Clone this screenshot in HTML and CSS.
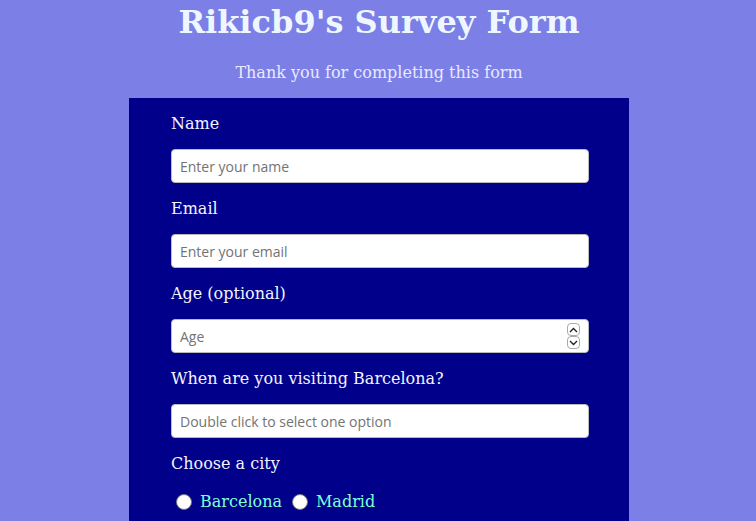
FILE: index.html
```html
<!DOCTYPE html>
<html>
<head>
<meta charset="utf-8">
<link rel="stylesheet" href="styles.css">
</head>
<body>
<h1 class="title">Rikicb9's Survey Form</h1>
<p class="subtitle">Thank you for completing this form</p>
<form class="survey">
  <label class="field-label">Name</label>
  <input class="field" type="text" placeholder="Enter your name">
  <label class="field-label">Email</label>
  <input class="field" type="email" placeholder="Enter your email">
  <label class="field-label">Age (optional)</label>
  <div class="number-wrap">
    <input class="field" type="number" placeholder="Age">
    <div class="spinner">
      <span class="spin-btn"><svg width="9" height="6" viewBox="0 0 9 6"><path d="M1 5 L4.5 1.5 L8 5" fill="none" stroke="#222" stroke-width="1.4"/></svg></span>
      <span class="spin-btn"><svg width="9" height="6" viewBox="0 0 9 6"><path d="M1 1 L4.5 4.5 L8 1" fill="none" stroke="#222" stroke-width="1.4"/></svg></span>
    </div>
  </div>
  <label class="field-label">When are you visiting Barcelona?</label>
  <input class="field" type="text" placeholder="Double click to select one option">
  <label class="field-label">Choose a city</label>
  <div class="radios">
    <label class="radio"><span class="radio-dot"></span>Barcelona</label>
    <label class="radio"><span class="radio-dot"></span>Madrid</label>
  </div>
</form>
</body>
</html>
```
FILE: styles.css
```css
html, body {
  margin: 0;
  padding: 0;
}
body {
  background: #7b7fe6;
  font-family: "DejaVu Serif", serif;
  height: 521px;
  overflow: hidden;
  padding-left: 2px;
  box-sizing: border-box;
}
.title {
  margin: 0;
  padding-top: 2px;
  text-align: center;
  color: #eef6ff;
  font-size: 32px;
  font-weight: bold;
  line-height: 40px;
}
.subtitle {
  margin: 0;
  padding-top: 19px;
  text-align: center;
  color: #eaeaff;
  font-size: 16px;
  line-height: 24px;
}
.survey {
  width: 500px;
  margin: 13px auto 0;
  background: #00008b;
  padding: 12px 40px 20px 42px;
  box-sizing: border-box;
  display: flex;
  flex-direction: column;
  min-height: 440px;
}
.field-label {
  color: #f4f4ff;
  font-size: 16px;
  line-height: 24px;
  margin-top: 2px;
  margin-bottom: 13px;
}
.field {
  width: 418px;
  height: 34px;
  box-sizing: border-box;
  border: 1px solid #bbb;
  border-radius: 4px;
  background: #fff;
  padding: 0 8px;
  font-family: "Open Sans", sans-serif;
  font-size: 14px;
  margin: 0 0 12px;
}
.field::placeholder {
  color: #737373;
}
.number-wrap {
  position: relative;
  width: 418px;
}
.number-wrap .field::-webkit-inner-spin-button,
.number-wrap .field::-webkit-outer-spin-button {
  -webkit-appearance: none;
  margin: 0;
}
.spinner {
  position: absolute;
  right: 9px;
  top: 4px;
  display: flex;
  flex-direction: column;
}
.spin-btn {
  width: 13px;
  height: 13px;
  box-sizing: border-box;
  border: 1px solid #aaa;
  border-radius: 4px;
  display: flex;
  align-items: center;
  justify-content: center;
  background: #fff;
}
.radios {
  display: flex;
  gap: 10px;
  padding-left: 5px;
  margin-top: 1px;
}
.radio {
  display: flex;
  align-items: center;
  color: #7fffd4;
  font-size: 16px;
  line-height: 24px;
}
.radio-dot {
  width: 16px;
  height: 16px;
  box-sizing: border-box;
  border-radius: 50%;
  background: #fff;
  border: 1px solid #777;
  margin-right: 8px;
}
```
